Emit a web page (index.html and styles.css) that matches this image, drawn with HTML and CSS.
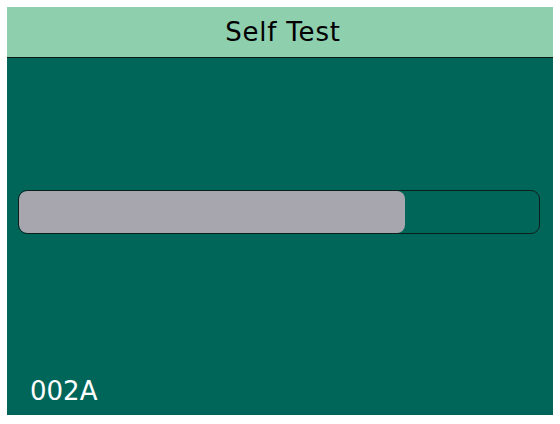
FILE: index.html
```html
<!DOCTYPE html>
<html>
<head>
<meta charset="utf-8">
<link rel="stylesheet" href="styles.css">
</head>
<body>
<div class="screen">
  <div class="header">Self Test</div>
  <div class="content">
    <div class="progress"><div class="fill" style="width: 74.3%"></div></div>
    <div class="code">002A</div>
  </div>
</div>
</body>
</html>
```
FILE: styles.css
```css
html, body { margin: 0; padding: 0; background: #ffffff; }
body { padding: 7px; }
.screen {
  width: 546px;
  height: 408px;
  display: flex;
  flex-direction: column;
  background: #00665a;
  font-family: "DejaVu Sans", sans-serif;
}
.header {
  height: 50px;
  border-bottom: 1px solid #0a1a14;
  background: #8ecfae;
  color: #000;
  font-size: 26px;
  letter-spacing: 0.8px;
  display: flex;
  align-items: center;
  justify-content: center;
  padding-left: 6px;
  box-sizing: content-box;
}
.content {
  flex: 1;
  display: flex;
  flex-direction: column;
  padding: 132px 13px 0 11px;
}
.progress {
  height: 42px;
  border: 1px solid #0b1f1a;
  border-radius: 9px;
  overflow: hidden;
}
.fill {
  height: 100%;
  background: #a7a6ae;
  border-radius: 8px;
}
.code {
  margin-top: auto;
  margin-bottom: 9px;
  margin-left: 12px;
  color: #ffffff;
  font-size: 26px;
}
```
